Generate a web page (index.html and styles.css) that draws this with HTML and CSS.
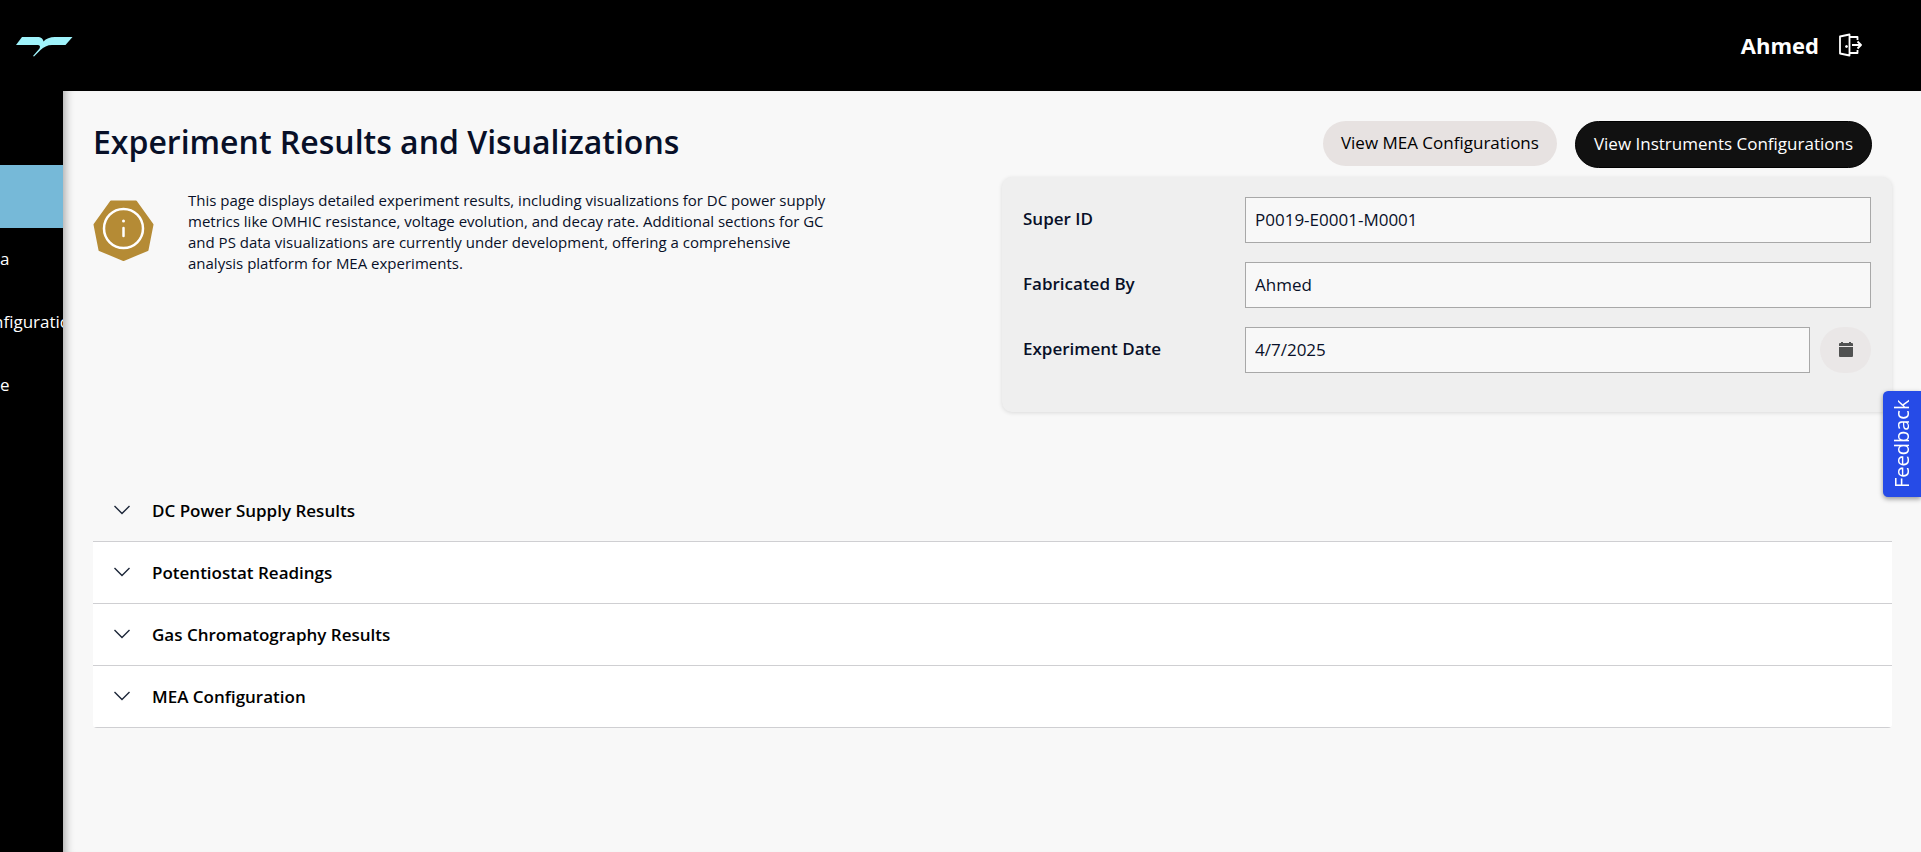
FILE: index.html
```html
<!DOCTYPE html>
<html lang="en">
<head>
<meta charset="utf-8">
<title>Experiment Results and Visualizations</title>
<link rel="stylesheet" href="styles.css">
</head>
<body>
<header class="topbar">
  <a class="logo" href="#" aria-label="Home">
    <svg width="58" height="22" viewBox="0 0 58 22"><path fill="#9ff3fb" d="M7 1H22C26.500 1 28 3 28.500 5.500C31 2.500 35 1 40 1H57.500L50.500 9H37C32.500 9 28.500 11 25.500 14L19 20.500L18 20L24.500 12.500C25.500 10.500 25 9 22 9H1Z"/></svg>
  </a>
  <div class="account">
    <span class="user">Ahmed</span>
    <button class="logout" type="button" aria-label="Sign out">
      <svg width="24" height="24" viewBox="0 0 24 24" fill="none" stroke="#fff" stroke-width="1.800" stroke-linejoin="round"><path d="M2 3.500L11.500 1.500V22.500L2 20.500Z"/><path d="M11.500 4H19.500V7M11.500 20H19.500V17"/><path d="M14 12H23M19.500 8.500L23 12L19.500 15.500"/><circle cx="8.500" cy="13.500" r="1" fill="#fff" stroke-width="1"/></svg>
    </button>
  </div>
</header>
<div class="shell">
  <nav class="sidebar" aria-label="Main">
    <a class="nav-item active" href="#" aria-label="Results"></a>
    <a class="nav-item" href="#">a</a>
    <a class="nav-item long" href="#">nfiguratio</a>
    <a class="nav-item" href="#">e</a>
  </nav>
  <main class="content">
    <div class="title-row">
      <h1>Experiment Results and Visualizations</h1>
      <div class="actions">
        <button class="pill light" type="button">View MEA Configurations</button>
        <button class="pill dark" type="button">View Instruments Configurations</button>
      </div>
    </div>
    <div class="overview">
      <div class="intro">
        <svg class="badge" width="61" height="61" viewBox="0 0 61 61"><path fill="#b58b35" stroke="#b58b35" stroke-width="2" stroke-linejoin="round" d="M18 1.500H43L59.500 24.500L54.500 50L30.500 60L6.500 50L1.500 24.500Z"/><circle cx="30.500" cy="28.500" r="19.500" fill="none" stroke="#fff" stroke-width="2.500"/><circle cx="30.500" cy="21" r="1.500" fill="#fff"/><path d="M30.500 28V36" stroke="#fff" stroke-width="2.500" stroke-linecap="round"/></svg>
        <p>This page displays detailed experiment results, including visualizations for DC power supply metrics like OMHIC resistance, voltage evolution, and decay rate. Additional sections for GC and PS data visualizations are currently under development, offering a comprehensive analysis platform for MEA experiments.</p>
      </div>
      <form class="card">
        <label for="super-id">Super ID</label>
        <input id="super-id" type="text" value="P0019-E0001-M0001">
        <label for="maker">Fabricated By</label>
        <input id="maker" type="text" value="Ahmed">
        <label for="date">Experiment Date</label>
        <div class="date-field">
          <input id="date" type="text" value="4/7/2025">
          <button class="calendar" type="button" aria-label="Choose date">
            <svg width="14" height="15" viewBox="0 0 14 15"><path fill="#505151" d="M2 0H4V1H10V0H12V1H13Q14 1 14 2V4H0V2Q0 1 1 1H2ZM0 5H14V14Q14 15 13 15H1Q0 15 0 14Z"/></svg>
          </button>
        </div>
      </form>
    </div>
    <div class="accordion">
      <button class="section open" type="button"><svg width="16" height="10" viewBox="0 0 16 10"><path d="M0.500 1L8 8.500L15.500 1"/></svg>DC Power Supply Results</button>
      <button class="section" type="button"><svg width="16" height="10" viewBox="0 0 16 10"><path d="M0.500 1L8 8.500L15.500 1"/></svg>Potentiostat Readings</button>
      <button class="section" type="button"><svg width="16" height="10" viewBox="0 0 16 10"><path d="M0.500 1L8 8.500L15.500 1"/></svg>Gas Chromatography Results</button>
      <button class="section" type="button"><svg width="16" height="10" viewBox="0 0 16 10"><path d="M0.500 1L8 8.500L15.500 1"/></svg>MEA Configuration</button>
    </div>
  </main>
</div>
<button class="feedback" type="button">Feedback</button>
</body>
</html>
```
FILE: styles.css
```css
* { box-sizing: border-box; }

body {
  margin: 0;
  min-height: 100vh;
  display: flex;
  flex-direction: column;
  background: #f8f8f8;
  color: #081028;
  font-family: "Open Sans", "Noto Sans", sans-serif;
  font-size: 17px;
}

button, input { font: inherit; color: inherit; }
button { border: 0; cursor: pointer; }
a { color: inherit; text-decoration: none; }
svg { display: block; flex: none; }

.topbar {
  height: 91px;
  padding: 0 59px 2px 15px;
  display: flex;
  align-items: center;
  justify-content: space-between;
  background: #000;
  color: #fff;
}
.logo { padding-top: 4px; }
.account { display: flex; align-items: center; gap: 19px; }
.user { font-size: 22px; font-weight: 700; }
.logout { padding: 0; background: none; }

.shell { flex: 1; display: flex; }

.sidebar {
  width: 63px;
  flex: none;
  padding-top: 74px;
  overflow: hidden;
  background: #000;
  color: #fff;
}
.nav-item {
  height: 63px;
  padding-bottom: 2px;
  display: flex;
  align-items: center;
}
.nav-item.long { justify-content: center; }
.nav-item.active { background: #76b9d8; }

.content {
  flex: 1;
  min-width: 0;
  padding: 30px 29px 30px 30px;
  box-shadow: inset 10px 0 10px -8px rgba(0, 0, 0, 0.35);
}

.title-row { display: flex; justify-content: space-between; }
h1 { margin: 0; font-size: 32px; line-height: 42px; font-weight: 600; }
.actions { display: flex; align-items: flex-start; gap: 18px; padding-right: 20px; }
.pill { border-radius: 24px; padding: 0 18px 2px; }
.pill.light { height: 45px; background: #e7e2e1; color: #000; }
.pill.dark { height: 47px; border: 1px solid #000; background: #111; color: #fff; }

.overview {
  display: grid;
  grid-template-columns: 1fr 890px;
  align-items: start;
  padding-top: 9px;
}
.intro { display: flex; gap: 34px; padding-top: 13px; }
.badge { margin-top: 10px; }
.intro p { margin: 0; max-width: 640px; font-size: 15px; line-height: 21px; }

.card {
  display: grid;
  grid-template-columns: 222px 1fr;
  row-gap: 19px;
  padding: 20px 21px 39px;
  border-radius: 10px;
  background: #efefef;
  box-shadow: 0 1px 4px rgba(0, 0, 0, 0.12);
}
.card label { padding-top: 9px; line-height: 25px; font-weight: 600; }
.card input {
  width: 100%;
  height: 46px;
  padding: 0 9px 2px;
  border: 1px solid #a8a8a8;
  background: #f8f8f8;
}
.date-field { display: flex; gap: 10px; }
.date-field input { flex: 1; min-width: 0; }
.calendar {
  width: 51px;
  height: 46px;
  padding: 0 0 2px;
  display: grid;
  place-items: center;
  border-radius: 23px;
  background: #eae7e7;
}

.accordion { margin-top: 68px; border-radius: 4px; overflow: hidden; }
.section {
  width: 100%;
  height: 62px;
  padding: 0 21px 1px;
  display: flex;
  align-items: center;
  gap: 22px;
  border-bottom: 1px solid #cfcfd2;
  background: #fff;
  color: #000;
  font-weight: 600;
  text-align: left;
}
.section.open { background: #f8f8f8; }
.section svg { fill: none; stroke: #1c2638; stroke-width: 1.400; }

.feedback {
  position: fixed;
  right: 0;
  top: 391px;
  width: 38px;
  height: 106px;
  padding: 0;
  display: grid;
  place-items: center;
  writing-mode: vertical-rl;
  transform: rotate(180deg);
  border-radius: 0 5px 5px 0;
  background: #264be7;
  color: #fff;
  font-size: 20px;
  line-height: 24px;
  box-shadow: 0 -2px 5px rgba(0, 0, 0, 0.4);
}
```
